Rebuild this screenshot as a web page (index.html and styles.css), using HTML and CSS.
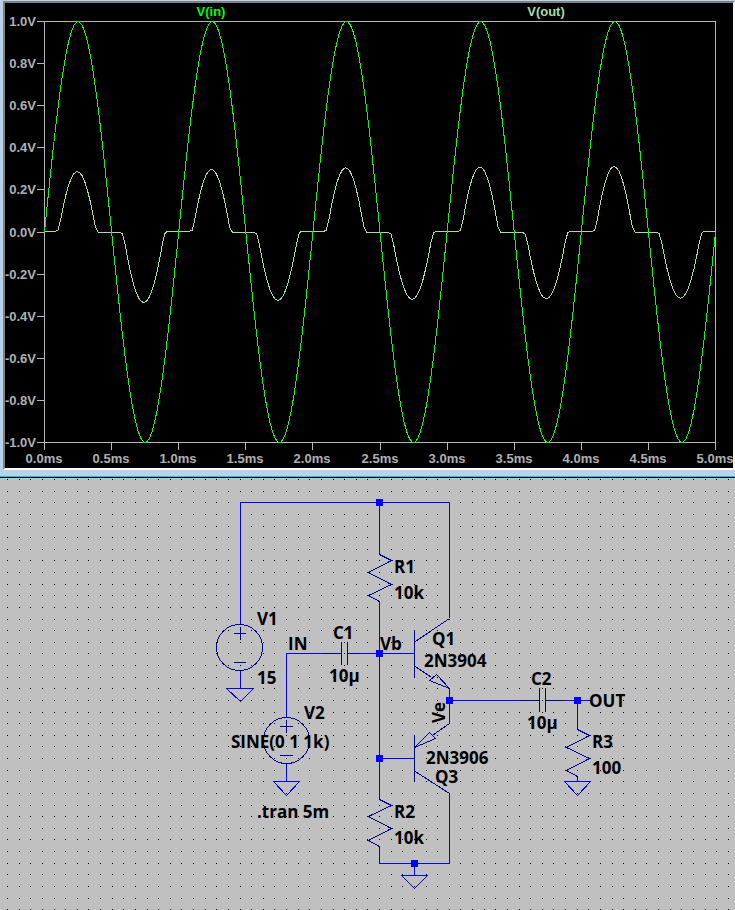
FILE: index.html
```
<!DOCTYPE html>
<html lang="en">
<head>
    <meta charset="UTF-8">
    <meta name="viewport" content="width=device-width, initial-scale=1.0">
    <title>Class B push-pull stage</title>
    <link rel="stylesheet" href="styles.css">
</head>
<body>
    <main class="workspace">
        <section class="window">
            <div class="plot-pane">
                <svg class="plot" viewBox="5 3 728 465" role="img" aria-label="V(in) and V(out) over time">
                    <g id="axes" class="axes">
                        <rect x="44.5" y="21.5" width="671" height="421"/>
                    </g>
                    <polyline id="traceOut" class="trace trace-out"/>
                    <polyline id="traceIn" class="trace trace-in"/>
                    <text class="label label-in" x="211" y="16">V(in)</text>
                    <text class="label label-out" x="546" y="16">V(out)</text>
                </svg>
            </div>
        </section>
        <section class="schematic-pane">
            <svg class="schematic" viewBox="0 478 735 432" role="img" aria-label="Schematic">
                <g id="grid" class="grid"></g>

                <g class="wire">
                    <path d="M240.5 624V502.5H449.5V618"/>
                    <path d="M379.5 502V554M379.5 601V799M379.5 846V863.5H449.5V793"/>
                    <path d="M286.5 717V653.5H322M360 653.5H414M379 758.5H414"/>
                    <path d="M449.5 688V723M449 700.5H521M563 700.5H590M577.5 700V729"/>
                    <path d="M240.5 671V688M286.5 764V781M414.5 863V875"/>
                    <!-- grounds -->
                    <path d="M226.5 688.5H253.5L240.5 701.5Z"/>
                    <path d="M273.5 781.5H299.5L286.5 795.5Z"/>
                    <path d="M401.5 875.5H427.5L414.5 888.5Z"/>
                    <path d="M564.5 781.5H590.5L577.5 795.5Z"/>
                </g>

                <g class="part">
                    <!-- V1, V2 -->
                    <circle cx="239.5" cy="647.5" r="23"/>
                    <path d="M234 633.5H246M240.5 627V640M234 662.5H246"/>
                    <circle cx="286.5" cy="740.5" r="23"/>
                    <path d="M280 726.5H293M286.5 720V733M280 755.5H293"/>
                    <!-- R1, R2, R3 -->
                    <path d="M379.5 554.5L391.5 560.5L368.5 572.5L391.5 584.5L368.5 595.5L379.5 601.5"/>
                    <path d="M379.5 799.5L391.5 805.5L368.5 816.5L391.5 828.5L368.5 840.5L379.5 846.5"/>
                    <path d="M577.5 729.5L589.5 735.5L566.5 747.5L589.5 758.5L566.5 770.5L577.5 776.5V781"/>
                    <!-- C1, C2 -->
                    <path d="M322 653.5H341.5M341.5 642V665M347.5 642V665M347.5 653.5H360"/>
                    <path d="M521 700.5H539.5M539.5 688V712M545.5 688V712M545.5 700.5H563"/>
                    <!-- Q1 -->
                    <path d="M414.5 630V678M414.5 642L449.5 618.5M414.5 666L431 677M449.5 688.5L436.5 674.5L429.5 680.5Z"/>
                    <!-- Q3 -->
                    <path d="M414.5 735V782M449.5 723.5L433 735M414.5 747.5L429.5 732.5L435.5 738.5ZM414.5 771L449.5 793.5"/>
                </g>

                <g class="node">
                    <rect x="376" y="499" width="7" height="7"/>
                    <rect x="376" y="650" width="7" height="7"/>
                    <rect x="376" y="755" width="7" height="7"/>
                    <rect x="411" y="860" width="7" height="7"/>
                    <rect x="446" y="697" width="7" height="7"/>
                    <rect x="574" y="697" width="7" height="7"/>
                </g>

                <g class="caption">
                    <text x="257" y="625">V1</text>
                    <text x="257" y="684">15</text>
                    <text x="288" y="650">IN</text>
                    <text x="333" y="639">C1</text>
                    <text x="329" y="682">10µ</text>
                    <text x="304" y="719">V2</text>
                    <text x="231" y="748">SINE(0 1 1k)</text>
                    <text x="257" y="818">.tran 5m</text>
                    <text x="394" y="573">R1</text>
                    <text x="394" y="599">10k</text>
                    <text x="380" y="650">Vb</text>
                    <text x="432" y="645">Q1</text>
                    <text x="424" y="667">2N3904</text>
                    <text transform="translate(445 723) rotate(-90)">Ve</text>
                    <text x="426" y="764">2N3906</text>
                    <text x="435" y="783">Q3</text>
                    <text x="394" y="818">R2</text>
                    <text x="394" y="844">10k</text>
                    <text x="531" y="685">C2</text>
                    <text x="527" y="729">10µ</text>
                    <text x="589" y="707">OUT</text>
                    <text x="592" y="748">R3</text>
                    <text x="592" y="774">100</text>
                </g>
            </svg>
        </section>
    </main>
    <script src="script.js"></script>
</body>
</html>
```
FILE: styles.css
```
body {
    margin: 0;
    background-color: #c0c0c0;
}
.workspace {
    display: flex;
    flex-direction: column;
}
.window {
    background-color: #b9d1ea;
    padding: 1px 0 7px 3px;
    border-bottom: 1px solid #000000;
    box-shadow: inset 0 -1px 0 #00c8f0;
}
.plot-pane {
    background-color: #000000;
    border: solid;
    border-width: 2px;
    border-color: #808080 #ffffff #ffffff #808080;
}
.plot,
.schematic {
    display: block;
    width: 100%;
    height: auto;
}
.axes rect,
.axes path {
    fill: none;
    stroke: #b8b8b8;
    shape-rendering: crispEdges;
}
.axes text {
    fill: #b0b0b0;
    text-anchor: middle;
}
.axes .volts {
    text-anchor: end;
}
.axes text,
.label {
    font-family: "Liberation Sans", Arial, sans-serif;
    font-size: 13px;
    font-weight: bold;
}
.label {
    text-anchor: middle;
}
.label-in {
    fill: #00ff00;
}
.label-out {
    fill: #a8dca8;
}
.trace {
    fill: none;
    shape-rendering: crispEdges;
}
.trace-in {
    stroke: #00ff00;
}
.trace-out {
    stroke: #a8dca8;
}
.grid rect {
    fill: #000000;
}
.wire,
.part {
    fill: none;
    shape-rendering: crispEdges;
}
.wire {
    stroke: #0000ff;
}
.part {
    stroke: #000094;
}
.node {
    fill: #0000ff;
}
.caption {
    fill: #000000;
    font-family: "Open Sans", Tahoma, sans-serif;
    font-size: 17px;
    font-weight: 700;
}
```
FILE: script.js
```
const NS = 'http://www.w3.org/2000/svg';
const LEFT = 44.5, TOP = 21.5, WIDTH = 671, HEIGHT = 421;

function add(parent, tag, attrs, text) {
    const el = document.createElementNS(NS, tag);
    for (const key in attrs) el.setAttribute(key, attrs[key]);
    if (text) el.textContent = text;
    parent.appendChild(el);
}

const px = ms => LEFT + ms / 5 * WIDTH;
const py = volts => TOP + (1 - volts) / 2 * HEIGHT;

// axis ticks
const axes = document.getElementById('axes');
for (let i = 0; i <= 10; i++) {
    const v = 1 - i / 5;
    const y = Math.floor(py(v)) + 0.5;
    const x = Math.floor(px(i / 2)) + 0.5;
    add(axes, 'path', { d: `M37 ${y}H44M${x} 443V450` });
    add(axes, 'text', { class: 'volts', x: 36, y: Math.round(y + 4) }, v.toFixed(1).replace('-0.0', '0.0') + 'V');
    add(axes, 'text', { x: Math.floor(x), y: 463 }, (i / 2).toFixed(1) + 'ms');
}

// crossover distortion: nothing comes out until the input passes the threshold
const POS = [0.287, 0.297, 0.305, 0.309, 0.311];
const NEG = [0.335, 0.325, 0.32, 0.317, 0.315];
const soft = x => 0.025 * Math.log(1 + Math.exp(x / 0.025));

function vout(t) {
    const n = Math.min(4, Math.floor(t));
    const up = Math.sin(2 * Math.PI * (t + 0.005));
    const down = -Math.sin(2 * Math.PI * (t + 0.01));
    return POS[n] * soft(up - 0.64) / 0.36
        - NEG[n] * soft(down - 0.57) / 0.43
        + 0.003 * Math.cos(2 * Math.PI * t);
}

const pin = [], pout = [];
for (let t = 0; t <= 5.0001; t += 0.02) {
    pin.push(px(t) + ',' + py(Math.sin(2 * Math.PI * t)));
    pout.push(px(t) + ',' + py(vout(t)));
}
document.getElementById('traceIn').setAttribute('points', pin.join(' '));
document.getElementById('traceOut').setAttribute('points', pout.join(' '));

// schematic grid dots
const grid = document.getElementById('grid');
const STEP = 93 / 8;
for (let y = 479; y < 910; y += STEP) {
    for (let x = 7; x < 735; x += STEP) {
        add(grid, 'rect', { x: Math.round(x), y: Math.round(y), width: 1, height: 1 });
    }
}
```
